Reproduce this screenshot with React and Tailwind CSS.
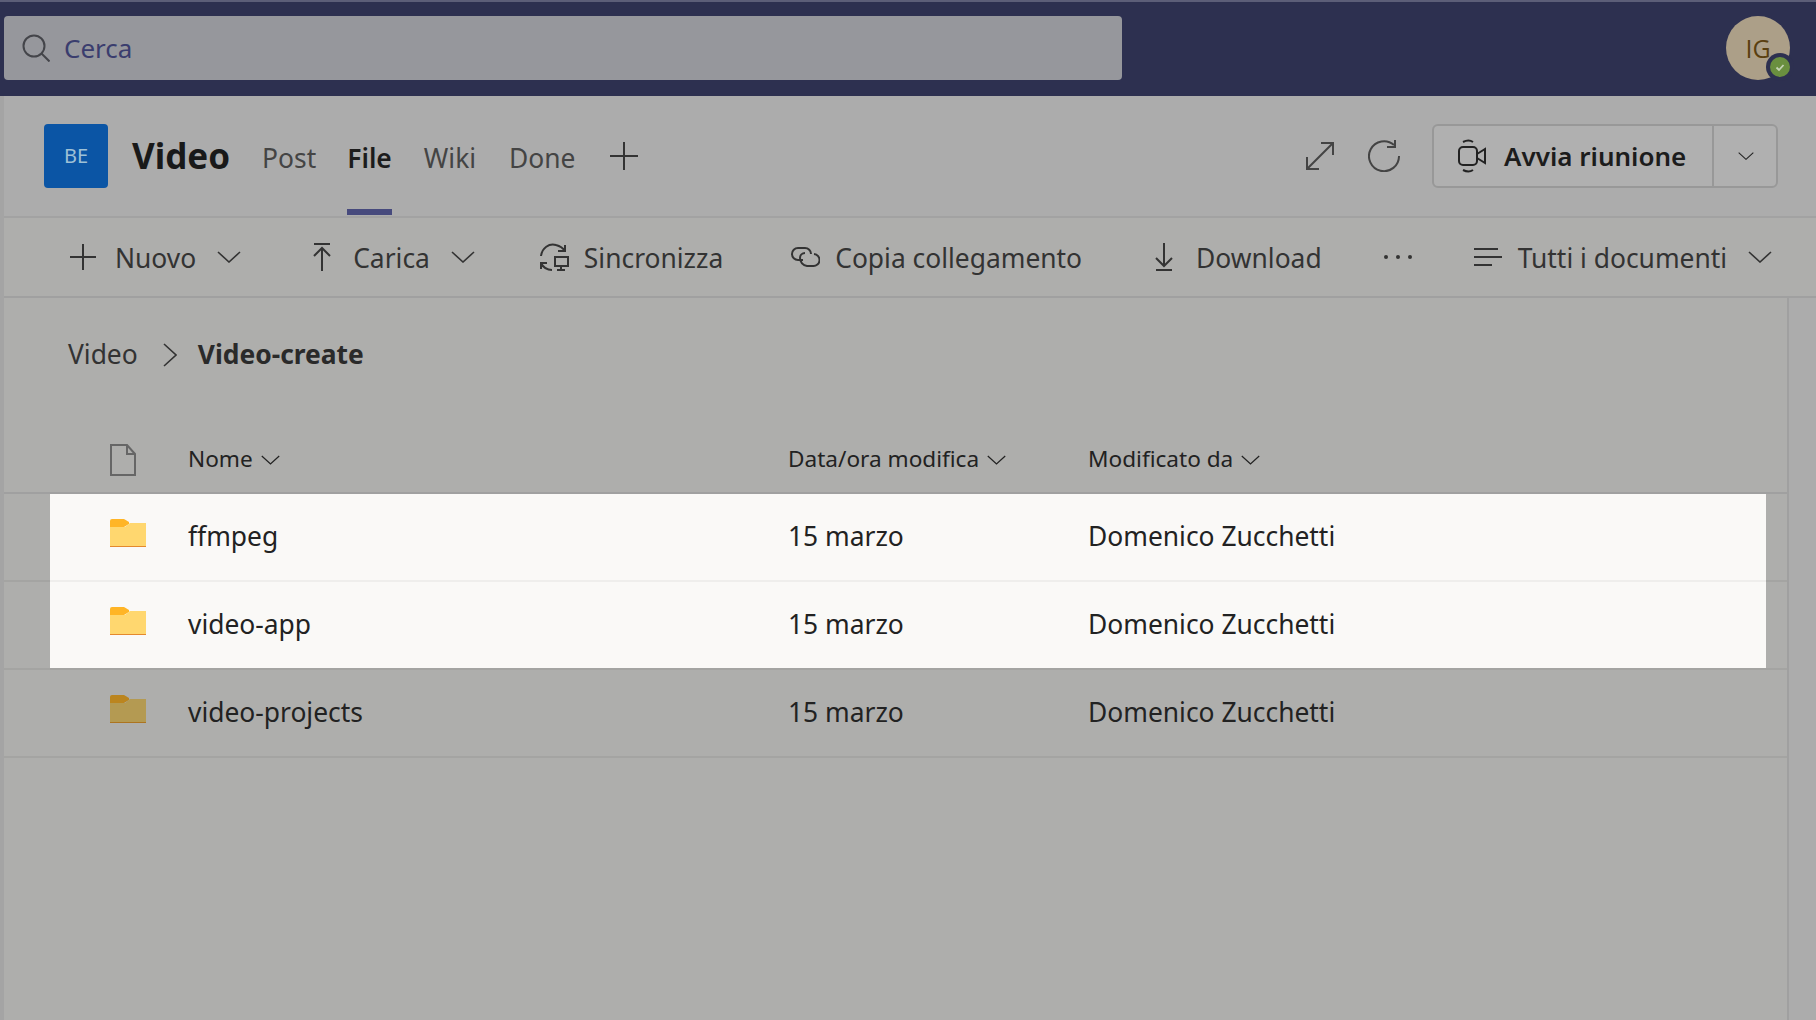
import React from 'react';

const Chevron = ({ className = 'w-6 h-3' }) => (
  <svg viewBox="0 0 24 12" className={className} fill="none" stroke="currentColor" strokeWidth="1.6">
    <path d="M1 1l11 10L23 1" />
  </svg>
);

const Folder = ({ dim }) => (
  <svg viewBox="0 0 36 28" className="w-9 h-7 shrink-0">
    <path d="M0 2a2 2 0 012-2h12l5 3 0 2-5 3H0z" fill={dim ? '#bb851f' : '#ffb526'} />
    <path d="M0 8h15l5-4h16v23H0z" fill={dim ? '#b49a52' : '#ffd76f'} />
    <rect y="27" width="36" height="1" fill={dim ? '#ac7420' : '#e4892e'} />
  </svg>
);

const ToolItem = ({ icon, label, chevron, className = '' }) => (
  <div className={`flex items-center text-[#333] ${className}`}>
    {icon}
    <span className="relative top-[1px]">{label}</span>
    {chevron && <Chevron className="w-6 h-3 ml-[21px]" />}
  </div>
);

const files = [
  { name: 'ffmpeg', rowClass: 'h-[88px] bg-[#faf9f7] border-b-2 border-[#efeeec]' },
  { name: 'video-app', rowClass: 'h-[86px] bg-[#faf9f7]' },
  { name: 'video-projects', rowClass: 'h-[86px]', dim: true },
];

export default function App() {
  return (
    <div className="w-full h-screen overflow-hidden flex flex-col bg-[#acacac] text-[26.4px] leading-none font-['Noto_Sans','Open_Sans',sans-serif]">
      {/* top bar */}
      <div className="h-[96px] shrink-0 bg-[#2d3050] border-t-2 border-[#5c5e78] flex items-center justify-between pl-1 pr-[26px] pb-[2px]">
        <div className="w-[1118px] h-16 rounded bg-[#96979c] flex items-center pl-[18px] text-[#3a3d6e] text-[26px]">
          <svg viewBox="0 0 28 28" className="w-7 h-7 text-[#44454a]" fill="none" stroke="currentColor" strokeWidth="2">
            <circle cx="12" cy="12" r="10.5" />
            <path d="M19.5 19.5l8 8" />
          </svg>
          <span className="ml-[14px]">Cerca</span>
        </div>
        <div className="relative w-16 h-16 rounded-full bg-[#ac9f88] flex items-center justify-center text-[#5a3f10] text-[25px] font-['Open_Sans',sans-serif]">
          IG
          <div className="absolute right-[-4px] bottom-[-1px] w-[28px] h-[28px] rounded-full bg-[#2d3050] flex items-center justify-center">
            <div className="w-[20px] h-[20px] rounded-full bg-[#6a8f3f] flex items-center justify-center">
              <svg viewBox="0 0 12 12" className="w-3 h-3" fill="none" stroke="#c5d3b5" strokeWidth="1.8">
                <path d="M2.5 6.5l2.5 2.5 4.5-5" />
              </svg>
            </div>
          </div>
        </div>
      </div>

      <div className="flex-1 flex flex-col border-l-4 border-[#a4a4a4] min-h-0">
        {/* channel header */}
        <div className="h-[122px] shrink-0 border-b-2 border-[#a2a2a2] flex items-center pl-10 pr-[38px]">
          <div className="w-16 h-16 rounded bg-[#0b55a5] flex items-center justify-center text-[#9fc1d6] text-[20px]">BE</div>
          <div className="ml-6 relative top-[-1px] text-[35px] font-bold text-[#191919]">Video</div>
          <div className="ml-8 relative top-[2px] text-[#444]">Post</div>
          <div className="ml-[31px] relative top-[2px] font-semibold text-[#1c1c1c]">
            File
            <div className="absolute left-0 right-0 top-[64px] h-[6px] bg-[#474a7d]" />
          </div>
          <div className="ml-8 relative top-[2px] text-[#444]">Wiki</div>
          <div className="ml-[33px] relative top-[2px] text-[#444]">Done</div>
          <svg viewBox="0 0 28 28" className="ml-[34px] w-7 h-7 text-[#333]" fill="none" stroke="currentColor" strokeWidth="2">
            <path d="M14 0v28M0 14h28" />
          </svg>
          <div className="flex-1" />
          <svg viewBox="0 0 28 28" className="w-7 h-7 text-[#444]" fill="none" stroke="currentColor" strokeWidth="2">
            <path d="M1 27L27 1M15 1h12v12M1 15v12h12" />
          </svg>
          <svg viewBox="0 0 32 32" className="ml-[34px] w-8 h-8 text-[#444]" fill="none" stroke="currentColor" strokeWidth="2">
            <path d="M26 5A15 15 0 1 0 31 16M27 0v7h-8" />
          </svg>
          <div className="ml-[32px] w-[346px] h-16 rounded-md border-2 border-[#989898] bg-[#b0b0b0] flex items-stretch">
            <div className="w-[280px] flex items-center pl-[24px] border-r-2 border-[#989898] font-semibold text-[26px] text-[#1c1c1c]">
              <svg viewBox="0 0 28 34" className="w-7 h-[34px] text-[#222]" fill="none" stroke="currentColor" strokeWidth="2">
                <rect x="1" y="8" width="18" height="18" rx="4" />
                <path d="M19 15l8-5v14l-8-5M5 3c4-2 7-2 10 0M5 31c4 2 7 2 10 0" />
              </svg>
              <span className="ml-[18px]">Avvia riunione</span>
            </div>
            <div className="flex-1 flex items-center justify-center pl-[2px] text-[#222]">
              <Chevron className="w-4 h-2" />
            </div>
          </div>
        </div>

        {/* toolbar */}
        <div className="h-[80px] shrink-0 border-b-2 border-[#a0a0a0] bg-[#aeaeac] flex items-center pl-[66px]">
          <ToolItem
            label="Nuovo"
            chevron
            icon={
              <svg viewBox="0 0 26 26" className="w-[26px] h-[26px] mr-[19px]" fill="none" stroke="currentColor" strokeWidth="2">
                <path d="M13 0v26M0 13h26" />
              </svg>
            }
          />
          <ToolItem
            className="ml-[72px]"
            label="Carica"
            chevron
            icon={
              <svg viewBox="0 0 18 28" className="w-[18px] h-7 mr-[22px]" fill="none" stroke="currentColor" strokeWidth="2">
                <path d="M1 1h16M9 28V6M1 13l8-8 8 8" />
              </svg>
            }
          />
          <ToolItem
            className="ml-[64px]"
            label="Sincronizza"
            icon={
              <svg viewBox="0 0 30 28" className="w-[30px] h-7 mr-[15px]" fill="none" stroke="currentColor" strokeWidth="2">
                <path d="M2 13C3 5 10 0 17 2c4 1 7 3 9 6M26 2v6h-7M2 20c2 4 6 7 11 7M2 26v-6h6" />
                <rect x="16" y="14" width="13" height="9" />
                <path d="M22 23v4M18 27h8" />
              </svg>
            }
          />
          <ToolItem
            className="ml-[67px]"
            label="Copia collegamento"
            icon={
              <svg viewBox="0 0 30 22" className="w-[30px] h-[22px] mr-[15px]" fill="none" stroke="currentColor" strokeWidth="2">
                <path d="M13 14H8A6 6 0 0 1 8 2h7a6 6 0 0 1 6 6" />
                <path d="M15 7a5 5 0 0 0-5 5 8 8 0 0 0 7 8h6a6 6 0 0 0 1-12" />
              </svg>
            }
          />
          <ToolItem
            className="ml-[73px]"
            label="Download"
            icon={
              <svg viewBox="0 0 18 28" className="w-[18px] h-7 mr-[23px]" fill="none" stroke="currentColor" strokeWidth="2">
                <path d="M9 0v22M1 15l8 8 8-8M1 27h16" />
              </svg>
            }
          />
          <div className="ml-[62px] flex gap-[8px]">
            <div className="w-[4px] h-[4px] rounded-full bg-[#333]" />
            <div className="w-[4px] h-[4px] rounded-full bg-[#333]" />
            <div className="w-[4px] h-[4px] rounded-full bg-[#333]" />
          </div>
          <ToolItem
            className="ml-[62px]"
            label="Tutti i documenti"
            chevron
            icon={
              <svg viewBox="0 0 28 18" className="w-7 h-[18px] mr-4" fill="none" stroke="currentColor" strokeWidth="2">
                <path d="M0 1h24M0 9h28M0 17h18" />
              </svg>
            }
          />
        </div>

        {/* content */}
        <div className="flex-1 flex min-h-0">
          <div className="w-[1785px] shrink-0 border-r-2 border-[#a0a0a0] bg-[#aeaeac]">
            <div className="h-[115px] flex items-center pl-[64px] pb-[2px] text-[#333]">
              <span>Video</span>
              <svg viewBox="0 0 14 24" className="ml-[25px] w-[14px] h-6" fill="none" stroke="currentColor" strokeWidth="1.6">
                <path d="M1 1l12 11L1 23" />
              </svg>
              <span className="ml-[21px] font-bold text-[#2a2a2a]">Video-create</span>
            </div>
            <div className="h-[81px] border-b-2 border-[#a0a0a0] grid grid-cols-[184px_600px_300px_1fr] items-center pt-[14px] text-[22.6px] text-[#222]">
              <div className="pl-[106px]">
                <svg viewBox="0 0 26 32" className="w-[26px] h-8 text-[#666]" fill="none" stroke="currentColor" strokeWidth="2">
                  <path d="M1 1h16l8 9v21H1zM17 1v9h8" />
                </svg>
              </div>
              <div className="flex items-center">
                Nome
                <Chevron className="w-[19px] h-[10px] ml-[8px]" />
              </div>
              <div className="flex items-center">
                Data/ora modifica
                <Chevron className="w-[19px] h-[10px] ml-[8px]" />
              </div>
              <div className="flex items-center">
                Modificato da
                <Chevron className="w-[19px] h-[10px] ml-[8px]" />
              </div>
            </div>
            {files.map((file) => (
              <div key={file.name} className="h-[88px] border-b-2 border-[#a4a4a2]">
                <div className={`ml-[46px] mr-[21px] grid grid-cols-[138px_600px_300px_1fr] items-center text-[#222] ${file.rowClass}`}>
                  <div className="pl-[60px] relative top-[-4px]">
                    <Folder dim={file.dim} />
                  </div>
                  <div className="relative top-[-1px]">{file.name}</div>
                  <div className="relative top-[-1px]">15 marzo</div>
                  <div className="relative top-[-1px]">Domenico Zucchetti</div>
                </div>
              </div>
            ))}
          </div>
          <div className="flex-1 bg-[#acacac]" />
        </div>
      </div>
    </div>
  );
}
